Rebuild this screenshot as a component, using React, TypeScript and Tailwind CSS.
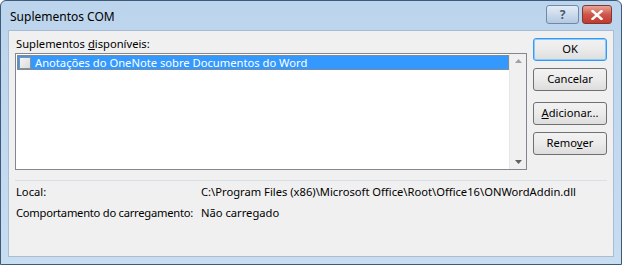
import React from 'react';

const font = { fontFamily: '"Segoe UI", "Noto Sans", "Open Sans", sans-serif' };

const Btn = ({ children, focus }: { children: React.ReactNode; focus?: boolean }) => (
  <button
    className={`w-[74px] h-[23px] rounded-[3px] border text-[11.2px] text-black bg-gradient-to-b from-[#f2f2f2] via-[#ebebeb] to-[#dddddd] ${
      focus ? 'border-[#3399ff] shadow-[inset_0_0_0_1px_#8ecbf3]' : 'border-[#707070]'
    }`}
  >
    {children}
  </button>
);

const App = () => {
  return (
    <div className="w-[622px] h-[265px] overflow-hidden bg-white" style={font}>
      <div className="w-full h-full flex flex-col rounded-t-[6px] border border-[#3c5a7a] bg-gradient-to-b from-[#bcd4ec] to-[#c9ddf1] px-[7px] pb-[7px]">
        {/* title bar */}
        <div className="h-[29px] flex items-center justify-between shrink-0">
          <span className="text-[12px] text-black pl-[2px] pt-[2px]">Suplementos COM</span>
          <div className="flex gap-[3px] mt-[-2px] mr-[2px]">
            <div className="w-[33px] h-[19px] rounded-[3px] border border-[#6d8aab] bg-gradient-to-b from-[#e3ecf6] to-[#b4c9e1] flex items-center justify-center text-[12px] font-bold text-[#4a5a70]">?</div>
            <div className="w-[30px] h-[19px] rounded-[3px] border border-[#7a3a34] bg-gradient-to-b from-[#e8a597] via-[#d0554a] to-[#c23a2c] flex items-center justify-center">
              <svg width="12" height="10" viewBox="0 0 12 10">
                <path d="M1.5 1 L10.5 9 M10.5 1 L1.5 9" stroke="#ffffff" strokeWidth="2.4" strokeLinecap="square" />
              </svg>
            </div>
          </div>
        </div>
        {/* client */}
        <div className="flex-1 bg-[#f0f0f0] border border-[#a7bdd6] flex flex-col px-[6px] text-[11.2px] text-black">
          <div className="flex pt-[5px]">
            <div className="w-[513px]">
              <div className="h-[16px] leading-[16px] pl-[1px]">
                Suplementos <span className="underline">d</span>isponíveis:
              </div>
              <div className="mt-[1px] h-[117px] border border-[#828790] bg-white flex">
                <div className="flex-1 pt-[1px] pl-[1px]">
                  <div className="h-[15px] flex items-center bg-[#3399ff] border border-dotted border-[#c08040]">
                    <div className="w-[12px] h-[12px] ml-[1px] border border-[#8f8f8f] bg-gradient-to-br from-[#f4f4f4] to-[#dcdcdc]" />
                    <span className="ml-[4px] text-white leading-[14px]">Anotações do OneNote sobre Documentos do Word</span>
                  </div>
                </div>
                <div className="w-[17px] bg-[#f0f0f0] border-l border-[#e6e6e6] flex flex-col justify-between items-center py-[5px]">
                  <svg width="7" height="4" viewBox="0 0 7 4"><path d="M0 4 L3.5 0 L7 4 Z" fill="#a0a0a0" /></svg>
                  <svg width="7" height="4" viewBox="0 0 7 4"><path d="M0 0 L3.5 4 L7 0 Z" fill="#606060" /></svg>
                </div>
              </div>
            </div>
            <div className="ml-[6px] flex flex-col pt-[2px]">
              <Btn focus>OK</Btn>
              <div className="mt-[7px]"><Btn>Cancelar</Btn></div>
              <div className="mt-[11px]"><Btn><span className="underline">A</span>dicionar...</Btn></div>
              <div className="mt-[7px]"><Btn>Remo<span className="underline">v</span>er</Btn></div>
            </div>
          </div>
          <div className="mt-[10px] h-px bg-[#d5dfe5]" />
          <div className="mt-[1px] flex h-[20px] items-center whitespace-nowrap">
            <span className="w-[186px] shrink-0 pl-[1px]">Local:</span>
            <span>C:\Program Files (x86)\Microsoft Office\Root\Office16\ONWordAddin.dll</span>
          </div>
          <div className="mt-[1px] flex h-[20px] items-center whitespace-nowrap">
            <span className="w-[186px] shrink-0 pl-[1px] tracking-[-0.25px]">Comportamento do carregamento:</span>
            <span>Não carregado</span>
          </div>
        </div>
      </div>
    </div>
  );
};

export default App;
